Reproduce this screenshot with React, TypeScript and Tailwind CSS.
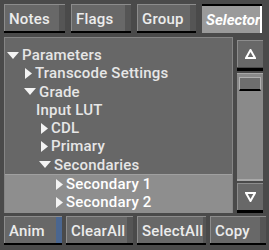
const font = { fontFamily: 'Roboto, "Liberation Sans", sans-serif' };

function Btn({ label, w, stripe }: { label: string; w: string; stripe?: string }) {
  return (
    <div className={`${w} flex flex-col`}>
      <div className="h-[27px] flex bg-[#686868] border-t border-l border-[#8c8c8c]">
        <div className="flex-1 flex items-center pl-[4px] pt-[3px] text-[15px] tracking-[0.2px] text-[#ececec] font-medium">{label}</div>
        <div className={`w-[6px] ${stripe ?? "bg-[#555555]"}`}></div>
      </div>
      <div className="h-[2px] bg-black"></div>
    </div>
  );
}

function Down() {
  return (
    <svg width="12" height="7" viewBox="0 0 12 7" className="shrink-0">
      <polygon points="0,0 12,0 6,7" fill="#f4f4f4" />
    </svg>
  );
}

function Right() {
  return (
    <svg width="7" height="11" viewBox="0 0 7 11" className="shrink-0">
      <polygon points="0,0 7,5.5 0,11" fill="#f4f4f4" />
    </svg>
  );
}

type Row = { label: string; pad: string; icon?: "down" | "right" };

const rows: Row[] = [
  { label: "Parameters", pad: "pl-[2px]", icon: "down" },
  { label: "Transcode Settings", pad: "pl-[20px]", icon: "right" },
  { label: "Grade", pad: "pl-[19px]", icon: "down" },
  { label: "Input LUT", pad: "pl-[31px]" },
  { label: "CDL", pad: "pl-[36px]", icon: "right" },
  { label: "Primary", pad: "pl-[36px]", icon: "right" },
  { label: "Secondaries", pad: "pl-[34px]", icon: "down" },
];

const selected: Row[] = [
  { label: "Secondary 1", pad: "pl-[51px]", icon: "right" },
  { label: "Secondary 2", pad: "pl-[51px]", icon: "right" },
];

function TreeRow({ r, light }: { r: Row; light?: boolean }) {
  return (
    <div className={`h-[18.3px] flex items-center gap-[3px] ${r.pad} text-[15px] tracking-[0.2px] font-medium whitespace-nowrap ${light ? "text-white" : "text-[#e6e6e6]"}`}>
      {r.icon === "down" && <Down />}
      {r.icon === "right" && <Right />}
      <span>{r.label}</span>
    </div>
  );
}

export default function App() {
  return (
    <div className="w-[269px] h-[250px] bg-[#4a4a4a] overflow-hidden flex flex-col pt-[4px] pl-[4px]" style={font}>
      {/* Top tabs */}
      <div className="flex gap-[6px] h-[29px]">
        <Btn label="Notes" w="w-[61px]" />
        <Btn label="Flags" w="w-[60px]" />
        <Btn label="Group" w="w-[59px]" />
        <div className="w-[60px] h-[29px] flex flex-col bg-[#9a9a9a]">
          <div className="h-[2px] bg-black"></div>
          <div className="flex-1 flex">
            <div className="flex-1 flex items-center pl-[4px] pt-[2px] text-[15px] italic font-bold text-white">Selector</div>
            <div className="w-[4px] bg-white"></div>
          </div>
        </div>
      </div>

      {/* Tree + scrollbar */}
      <div className="flex mt-[4px] h-[176px]">
        <div className="w-[229px] flex flex-col bg-[#676767] border-t border-l border-r border-[#858585] pt-[8px] overflow-hidden">
          {rows.map((r) => (
            <TreeRow key={r.label} r={r} />
          ))}
          <div className="flex-1 bg-[#8e8e8e] border-t border-[#a0a0a0]">
            {selected.map((r) => (
              <TreeRow key={r.label} r={r} light />
            ))}
          </div>
        </div>
        <div className="w-[36px] flex flex-col pl-[4px] pr-[6px] pt-[3px]">
          <div className="h-[27px] bg-[#686868] border-t border-l border-[#8c8c8c] flex items-center justify-center">
            <svg width="11" height="10" viewBox="0 0 11 10">
              <polygon points="5.5,1 10,9 1,9" fill="none" stroke="#ffffff" strokeWidth="2" />
            </svg>
          </div>
          <div className="h-[3px] bg-black mt-[1px]"></div>
          <div className="flex-1 mt-[2px] bg-[#8a8a8a] border-t border-[#a8a8a8] flex flex-col px-[2px] pt-[3px]">
            <div className="h-[14px] bg-[#6e6e6e] border border-[#b0b0b0] border-b-2 border-b-black"></div>
          </div>
          <div className="h-[2px] bg-[#a8a8a8]"></div>
          <div className="h-[2px]"></div>
          <div className="h-[27px] bg-[#686868] border-t border-l border-[#8c8c8c] flex items-center justify-center">
            <svg width="11" height="10" viewBox="0 0 11 10">
              <polygon points="1,1 10,1 5.5,9" fill="none" stroke="#ffffff" strokeWidth="2" />
            </svg>
          </div>
          <div className="h-[3px] bg-black"></div>
        </div>
      </div>

      {/* Bottom buttons */}
      <div className="flex gap-[4px] mt-[3px] h-[31px]">
        <Btn label="Anim" w="w-[58px]" stripe="bg-[#4a6690]" />
        <Btn label="ClearAll" w="w-[67px]" />
        <Btn label="SelectAll" w="w-[69px]" />
        <Btn label="Copy" w="w-[56px]" />
      </div>
    </div>
  );
}
